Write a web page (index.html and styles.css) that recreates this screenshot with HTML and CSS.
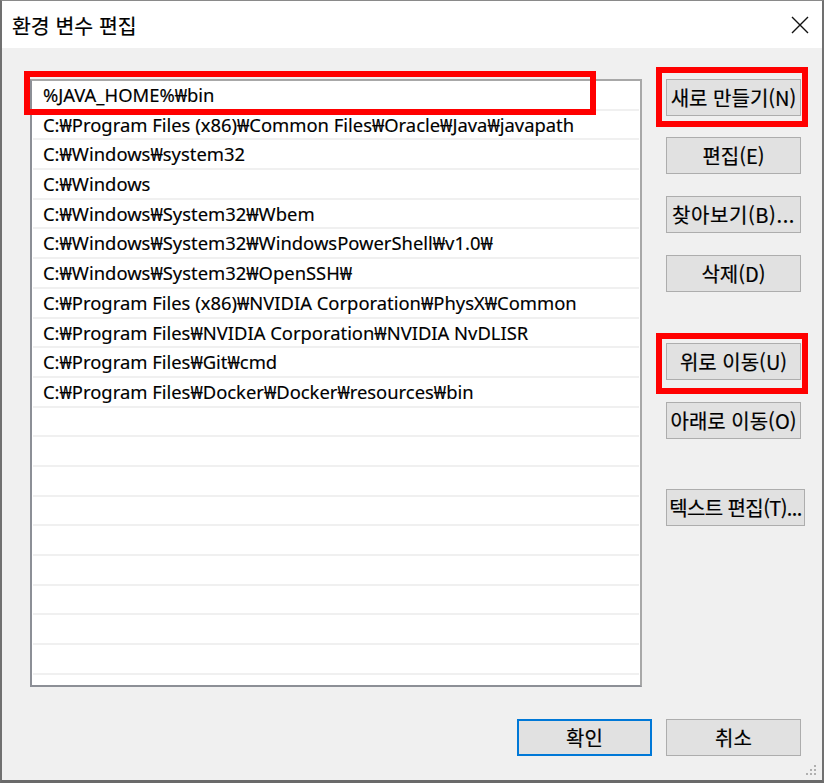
FILE: index.html
```html
<!DOCTYPE html>
<html lang="ko">
<head>
<meta charset="utf-8">
<title>환경 변수 편집</title>
<link rel="stylesheet" href="styles.css">
</head>
<body>
<div class="window">
  <div class="titlebar">
    <span class="title">환경 변수 편집</span>
    <svg class="close" width="18" height="18" viewBox="0 0 18 18"><path d="M1 1 L17 17 M17 1 L1 17" stroke="#111" stroke-width="1.4" fill="none"/></svg>
  </div>
  <div class="body">
    <div class="main">
      <div class="list">
        <div class="row">%JAVA_HOME%₩bin</div>
        <div class="row">C:₩Program Files (x86)₩Common Files₩Oracle₩Java₩javapath</div>
        <div class="row">C:₩Windows₩system32</div>
        <div class="row">C:₩Windows</div>
        <div class="row">C:₩Windows₩System32₩Wbem</div>
        <div class="row">C:₩Windows₩System32₩WindowsPowerShell₩v1.0₩</div>
        <div class="row">C:₩Windows₩System32₩OpenSSH₩</div>
        <div class="row">C:₩Program Files (x86)₩NVIDIA Corporation₩PhysX₩Common</div>
        <div class="row">C:₩Program Files₩NVIDIA Corporation₩NVIDIA NvDLISR</div>
        <div class="row">C:₩Program Files₩Git₩cmd</div>
        <div class="row">C:₩Program Files₩Docker₩Docker₩resources₩bin</div>
        <div class="row"></div>
        <div class="row"></div>
        <div class="row"></div>
        <div class="row"></div>
        <div class="row"></div>
        <div class="row"></div>
        <div class="row"></div>
        <div class="row"></div>
        <div class="row"></div>
        <div class="row"></div>
      </div>
      <div class="side">
        <button class="btn">새로 만들기(N)</button>
        <button class="btn g21">편집(E)</button>
        <button class="btn g22 spaced">찾아보기(B)...</button>
        <button class="btn g22">삭제(D)</button>
        <button class="btn g51">위로 이동(U)</button>
        <button class="btn g22">아래로 이동(O)</button>
        <button class="btn g50 wide">텍스트 편집(T)...</button>
      </div>
    </div>
    <div class="footer">
      <button class="btn default">확인</button>
      <button class="btn">취소</button>
    </div>
  </div>
  <div class="hl hl-row"></div>
  <div class="hl hl-new"></div>
  <div class="hl hl-up"></div>
  <svg class="grip" width="12" height="12" viewBox="0 0 12 12">
    <rect x="8" y="0" width="2" height="2" fill="#b0b0b0"/>
    <rect x="4" y="4" width="2" height="2" fill="#b0b0b0"/>
    <rect x="8" y="4" width="2" height="2" fill="#b0b0b0"/>
    <rect x="0" y="8" width="2" height="2" fill="#b0b0b0"/>
    <rect x="4" y="8" width="2" height="2" fill="#b0b0b0"/>
    <rect x="8" y="8" width="2" height="2" fill="#b0b0b0"/>
  </svg>
</div>
</body>
</html>
```

FILE: styles.css
```css
* { box-sizing: border-box; }
html, body { margin: 0; padding: 0; }
body {
  font-family: "Noto Sans CJK KR", "Noto Sans", sans-serif;
  color: #000;
  background: #fff;
}
.window {
  position: relative;
  width: 824px;
  height: 783px;
  display: flex;
  flex-direction: column;
  border-top: 1px solid #8a8a8a;
  border-left: 2px solid #707070;
  border-right: 2px solid #707070;
  border-bottom: 3px solid #6a6a6a;
  overflow: hidden;
}
.titlebar {
  height: 47px;
  background: #fff;
  display: flex;
  align-items: center;
  justify-content: space-between;
  padding: 0 13px 0 10px;
  flex-shrink: 0;
}
.title {
  font-size: 20.5px;
  -webkit-text-stroke: 0.2px #000;
}
.close { display: block; margin-top: 1px; }
.body {
  flex: 1;
  background: #f0f0f0;
  display: flex;
  flex-direction: column;
}
.main {
  display: flex;
  padding: 31px 0 0 28px;
}
.list {
  width: 612px;
  height: 608px;
  background: #fff;
  border: 2px solid #8c8f96;
  border-right-color: #a8a8a8;
  border-top-color: #a8a8a8;
  overflow: hidden;
  padding: 0 1px;
}
.row {
  height: 29.7px;
  border-bottom: 2px solid #f0f0f0;
  padding-left: 10px;
  font-family: "Noto Sans", "Noto Sans CJK KR", sans-serif;
  font-size: 18.4px;
  line-height: 28px;
  white-space: nowrap;
  -webkit-text-stroke: 0.15px #000;
}
.side {
  display: flex;
  flex-direction: column;
  align-items: flex-start;
  margin-left: 24px;
}
.btn {
  font-family: inherit;
  font-size: 20px;
  color: #000;
  background: #e1e1e1;
  border: 1px solid #adadad;
  height: 37px;
  min-width: 135px;
  padding: 0 2px;
  margin: 0;
  line-height: 33px;
  white-space: nowrap;
  -webkit-text-stroke: 0.2px #000;
}
.spaced { letter-spacing: 0.6px; }
.wide { min-width: 139px; letter-spacing: -0.6px; }
.g21 { margin-top: 21px; }
.g22 { margin-top: 22px; }
.g51 { margin-top: 51px; }
.g50 { margin-top: 50px; }
.footer {
  display: flex;
  justify-content: flex-end;
  gap: 14px;
  padding: 32px 21px 0 0;
}
.default {
  border: 2px solid #0078d7;
}
.hl {
  position: absolute;
  border: 6px solid #ff0000;
}
.hl-row { left: 22px; top: 70px; width: 572px; height: 44px; }
.hl-new { left: 654px; top: 66px; width: 152px; height: 60px; }
.hl-up { left: 654px; top: 332px; width: 152px; height: 61px; }
.grip {
  position: absolute;
  right: 4px;
  bottom: 3px;
}
```
